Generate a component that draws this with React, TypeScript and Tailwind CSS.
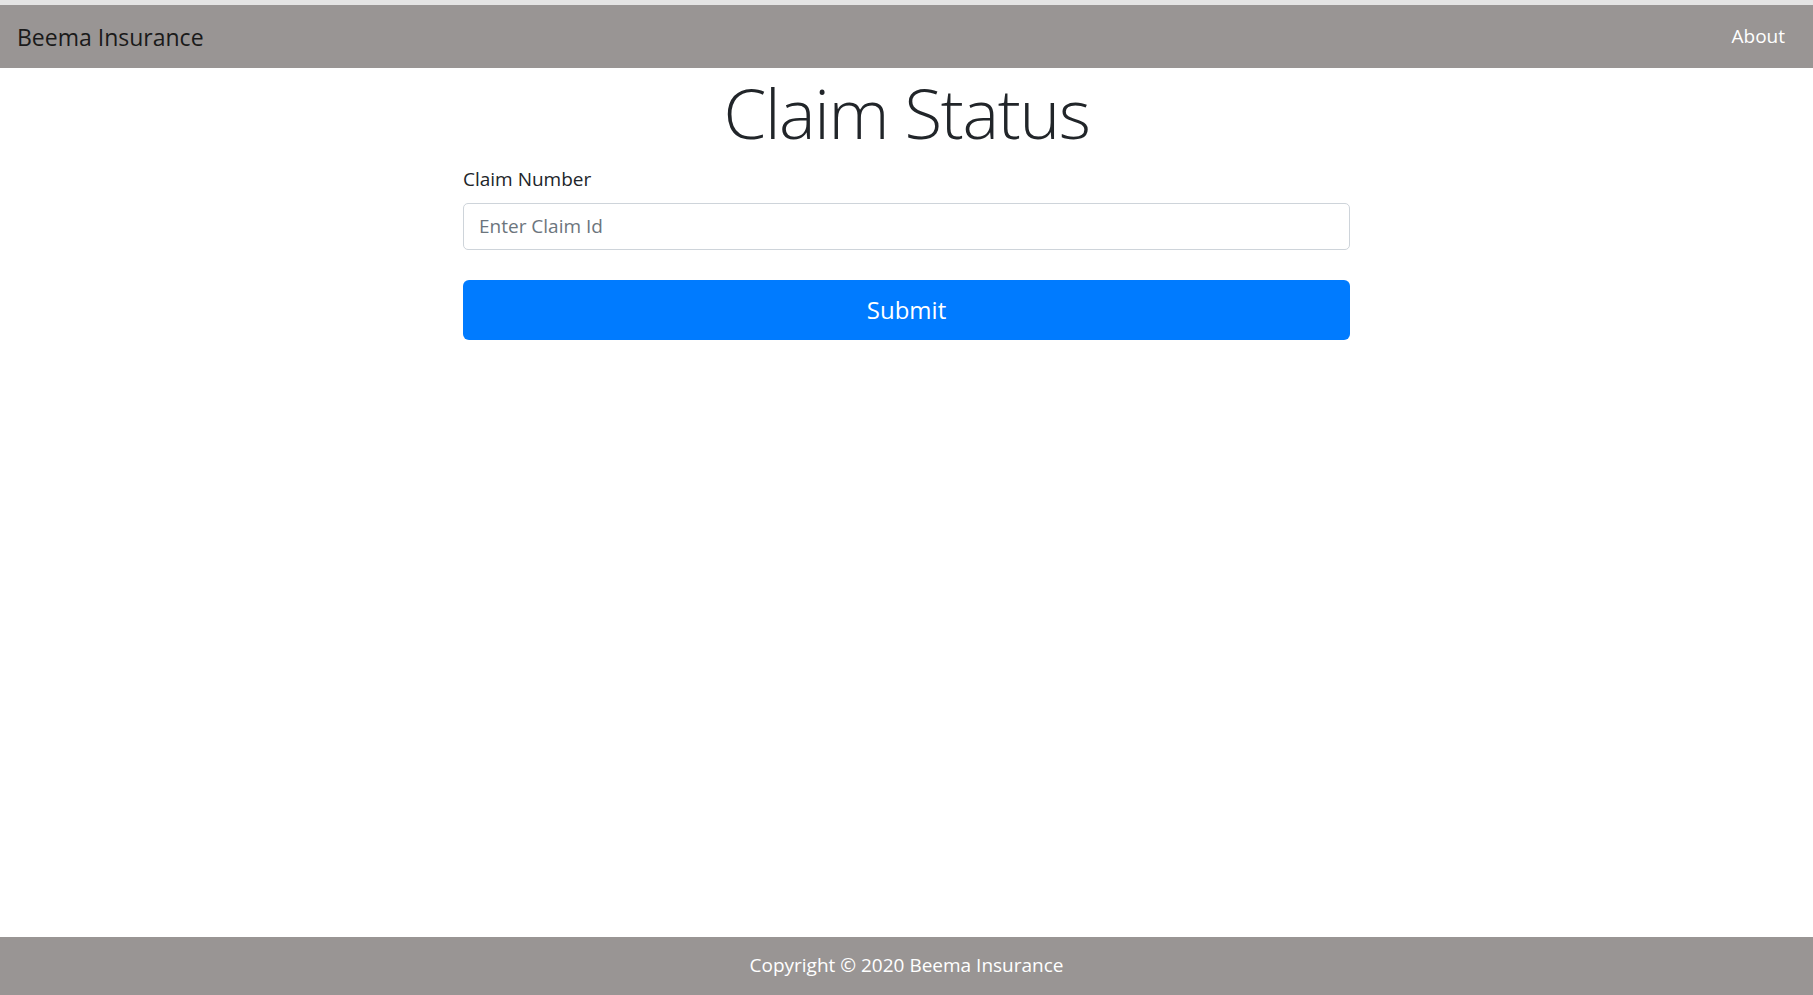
export default function App() {
  return (
    <div
      className="min-h-screen flex flex-col bg-white text-[#212529]"
      style={{ fontFamily: '"Open Sans", "Noto Sans", sans-serif' }}
    >
      {/* top strip */}
      <div className="h-[5px] bg-[#e4e4e4]" />

      {/* Navbar */}
      <nav className="h-[63px] bg-[#999594] flex items-center justify-between pl-[17px] pr-[28px]">
        <span className="text-[23px] text-[#1a1a1a] leading-none mt-[2px]">Beema Insurance</span>
        <a className="text-[19px] text-white leading-none cursor-pointer">About</a>
      </nav>

      {/* Main */}
      <main className="flex-1">
        <div className="w-[887px] mx-auto">
          <h1 className="text-center text-[69px] font-light leading-[1.2] tracking-[-0.02em] mt-[3px]">
            Claim Status
          </h1>
          <div className="mt-[10px]">
            <label className="block text-[19px] leading-[30px] mb-[9px]">Claim Number</label>
            <input
              type="text"
              placeholder="Enter Claim Id"
              className="w-full h-[47px] px-[15px] border border-[#ced4da] rounded-[5px] text-[19px] text-[#495057] placeholder:text-[#6c757d] outline-none"
            />
          </div>
          <button className="mt-[30px] w-full h-[60px] bg-[#007bff] text-white text-[24px] rounded-[6px]">
            Submit
          </button>
        </div>
      </main>

      {/* Footer */}
      <footer className="h-[58px] bg-[#999594] flex items-center justify-center">
        <span className="text-[19px] text-white mb-[2px]">Copyright © 2020 Beema Insurance</span>
      </footer>
    </div>
  );
}
